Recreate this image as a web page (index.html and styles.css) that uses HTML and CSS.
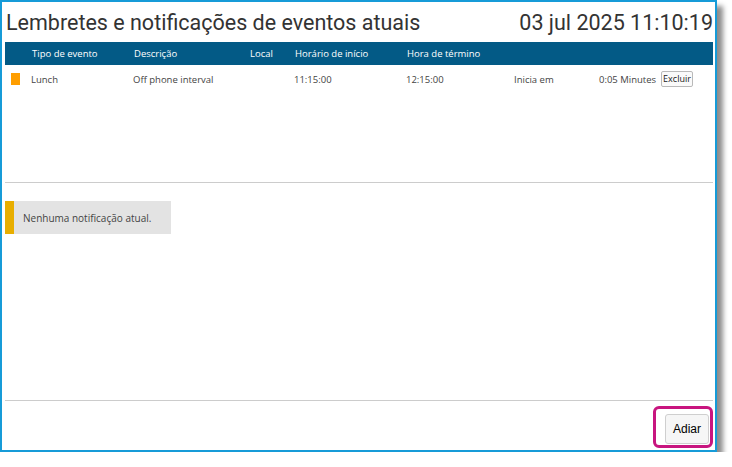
FILE: index.html
```html
<!DOCTYPE html>
<html lang="pt">
<head>
<meta charset="utf-8">
<title>Lembretes</title>
<link rel="stylesheet" href="styles.css">
</head>
<body>
<div class="window">
  <div class="titlebar">
    <h1 class="title">Lembretes e notificações de eventos atuais</h1>
    <div class="clock">03 jul 2025 11:10:19</div>
  </div>
  <div class="events">
    <div class="grid head">
      <div></div>
      <div class="h">Tipo de evento</div>
      <div class="h">Descrição</div>
      <div class="h">Local</div>
      <div class="h">Horário de início</div>
      <div class="h">Hora de término</div>
      <div></div>
      <div></div>
    </div>
    <div class="grid row">
      <div class="flagcell"><span class="flag"></span></div>
      <div>Lunch</div>
      <div>Off phone interval</div>
      <div></div>
      <div>11:15:00</div>
      <div>12:15:00</div>
      <div>Inicia em</div>
      <div class="remain"><span>0:05 Minutes</span><button class="small-btn">Excluir</button></div>
    </div>
  </div>
  <div class="notifications">
    <div class="notice"><span class="notice-bar"></span><span class="notice-text">Nenhuma notificação atual.</span></div>
  </div>
  <div class="footer">
    <div class="highlight"><button class="btn">Adiar</button></div>
  </div>
</div>
</body>
</html>
```
FILE: styles.css
```css
html, body {
  margin: 0;
  padding: 0;
  background: #ffffff;
}
.window {
  width: 717px;
  height: 452px;
  box-sizing: border-box;
  border: 2px solid #169bd8;
  background: #ffffff;
  box-shadow: 6px 6px 5px rgba(0, 0, 0, 0.45);
  display: flex;
  flex-direction: column;
  padding: 0 2px 0 3px;
}
.titlebar {
  height: 40px;
  display: flex;
  align-items: center;
  justify-content: space-between;
  padding: 0 0 0 1px;
}
.title {
  margin: 0;
  font-family: Roboto, "Noto Sans", sans-serif;
  font-weight: 400;
  font-size: 21.5px;
  color: #333333;
}
.clock {
  font-family: Roboto, "Noto Sans", sans-serif;
  font-size: 21.5px;
  color: #333333;
}
.events {
  height: 140px;
  border-bottom: 1px solid #cccccc;
  font-family: "Open Sans", "Noto Sans", sans-serif;
  font-size: 9.5px;
  color: #444444;
}
.grid {
  display: grid;
  grid-template-columns: 26px 102px 116px 45px 112px 108px 85px 1fr;
  align-items: center;
}
.head {
  height: 23px;
  background: #035a86;
  color: #ffffff;
}
.head .h {
  padding-left: 1px;
}
.row {
  height: 28px;
}
.flagcell {
  display: flex;
  padding-left: 6px;
}
.flag {
  width: 9px;
  height: 12px;
  background: #ff9e00;
}
.remain {
  display: flex;
  align-items: center;
  gap: 5px;
}
.small-btn {
  font-family: "Open Sans", "Noto Sans", sans-serif;
  font-size: 9px;
  color: #222222;
  background: #fafafa;
  border: 1px solid #b9b9b9;
  border-radius: 2px;
  height: 16px;
  padding: 0 1px;
  line-height: 12px;
}
.notifications {
  height: 218px;
  border-bottom: 1px solid #cccccc;
  padding-top: 18px;
  box-sizing: border-box;
}
.notice {
  width: 166px;
  height: 33px;
  display: flex;
  align-items: center;
  background: #e3e3e3;
}
.notice-bar {
  width: 9px;
  height: 100%;
  background: #e8ae00;
}
.notice-text {
  padding-left: 9px;
  font-family: "Open Sans", "Noto Sans", sans-serif;
  font-size: 10px;
  color: #444444;
}
.footer {
  flex: 1;
  display: flex;
  justify-content: flex-end;
  align-items: flex-start;
  padding-top: 5px;
}
.highlight {
  border: 3px solid #c8157f;
  border-radius: 6px;
  padding: 5px 1px 1px 9px;
}
.btn {
  width: 44px;
  height: 30px;
  font-family: "Liberation Sans", Arial, sans-serif;
  font-size: 12px;
  color: #000000;
  background: #f6f6f6;
  border: 1px solid #cfcfcf;
  border-radius: 3px;
  padding: 0;
  display: block;
}
```
